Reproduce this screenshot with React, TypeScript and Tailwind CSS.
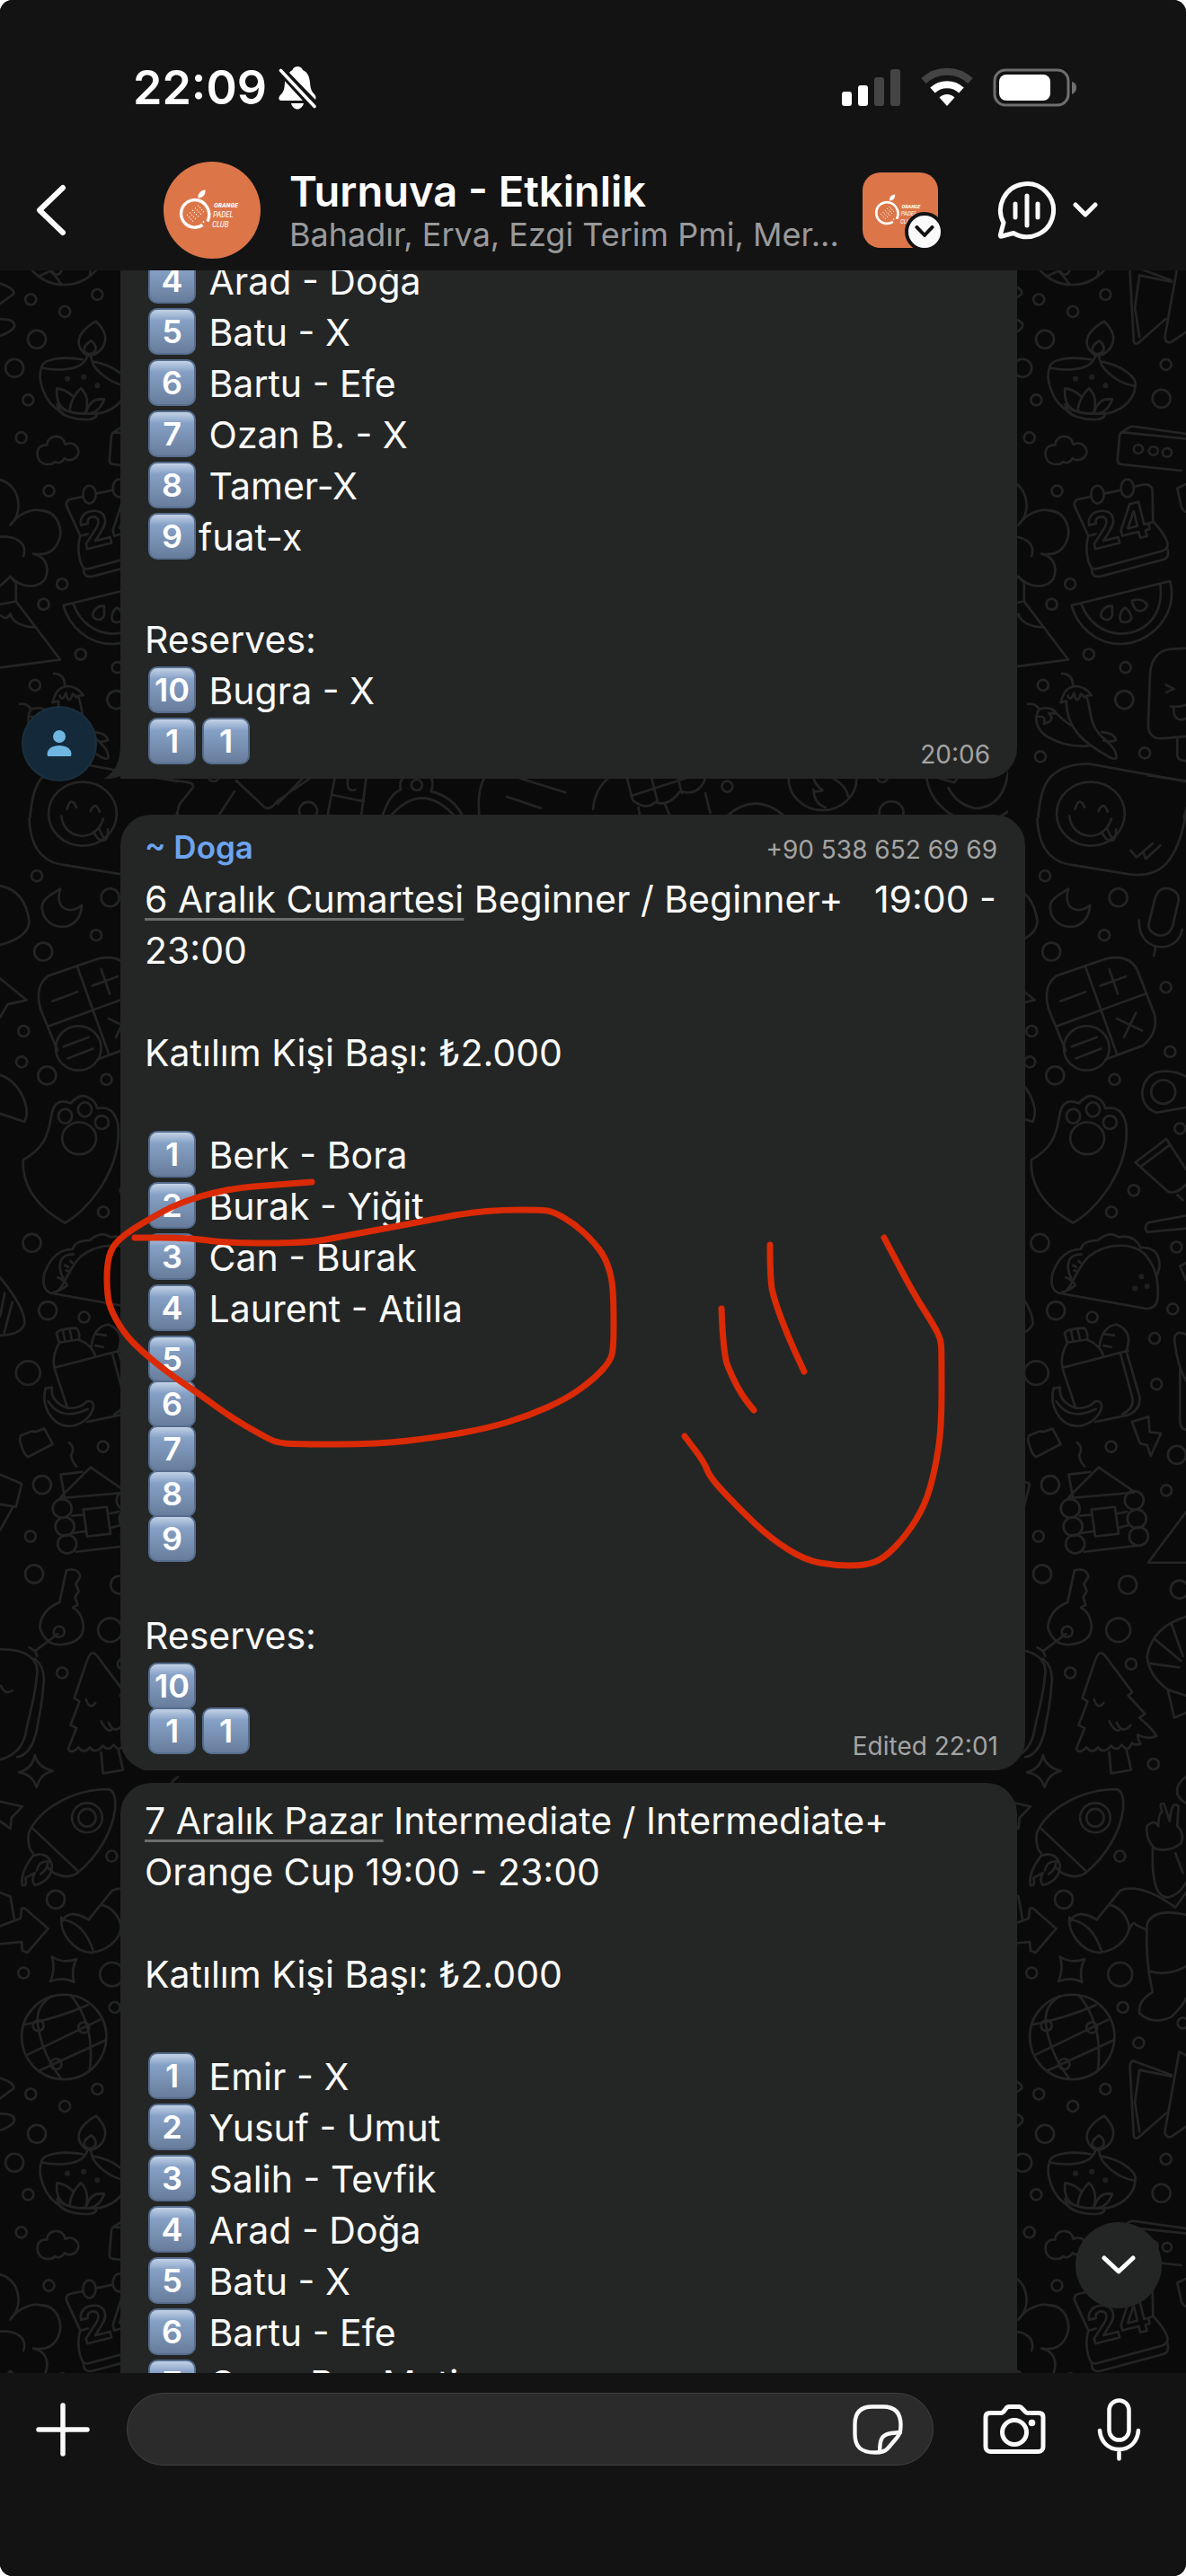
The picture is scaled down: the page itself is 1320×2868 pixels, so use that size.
import type { ReactNode } from "react";
import clsx from "clsx";

type Point = [number, number];

interface Row {
  keys?: string[];
  text?: string;
  link?: string;
}

const FIRST_ROWS: Row[] = [
  { keys: ["4"], text: " Arad - Doğa" },
  { keys: ["5"], text: " Batu - X" },
  { keys: ["6"], text: " Bartu - Efe" },
  { keys: ["7"], text: " Ozan B. - X" },
  { keys: ["8"], text: " Tamer-X" },
  { keys: ["9"], text: "fuat-x" },
  {},
  { text: "Reserves:" },
  { keys: ["10"], text: " Bugra - X" },
  { keys: ["1", "1"] },
];

const SATURDAY_ROWS: Row[] = [
  { link: "6 Aralık Cumartesi", text: " Beginner / Beginner+   19:00 -" },
  { text: "23:00" },
  {},
  { text: "Katılım Kişi Başı: ₺2.000" },
  {},
  { keys: ["1"], text: " Berk - Bora" },
  { keys: ["2"], text: " Burak - Yiğit" },
  { keys: ["3"], text: " Can - Burak" },
  { keys: ["4"], text: " Laurent - Atilla" },
  { keys: ["5"] },
  { keys: ["6"] },
  { keys: ["7"] },
  { keys: ["8"] },
  { keys: ["9"] },
  {},
  { text: "Reserves:" },
  { keys: ["10"] },
  { keys: ["1", "1"] },
];

const SUNDAY_ROWS: Row[] = [
  { link: "7 Aralık Pazar", text: " Intermediate / Intermediate+" },
  { text: "Orange Cup 19:00 - 23:00" },
  {},
  { text: "Katılım Kişi Başı: ₺2.000" },
  {},
  { keys: ["1"], text: " Emir - X" },
  { keys: ["2"], text: " Yusuf - Umut" },
  { keys: ["3"], text: " Salih - Tevfik" },
  { keys: ["4"], text: " Arad - Doğa" },
  { keys: ["5"], text: " Batu - X" },
  { keys: ["6"], text: " Bartu - Efe" },
  { keys: ["7"], text: " Ozan B. - Metin" },
];

const INK: Point[][] = [
  [
    [347, 1316], [309, 1319], [269, 1322], [236, 1328], [198, 1340], [168, 1356], [139, 1374], [124, 1389],
    [119, 1409], [119, 1436], [122, 1456], [137, 1483], [156, 1503], [189, 1530], [219, 1550], [257, 1578],
    [290, 1597], [307, 1606], [328, 1608], [421, 1608], [488, 1600], [543, 1590], [589, 1576], [631, 1557],
    [660, 1536], [679, 1516], [683, 1500], [683, 1451], [681, 1422], [673, 1399], [660, 1382], [640, 1363],
    [616, 1349], [602, 1347], [560, 1347], [522, 1350], [480, 1358], [379, 1377], [341, 1384], [253, 1384],
    [210, 1378], [150, 1378],
  ],
  [
    [984, 1378], [995, 1399], [1018, 1442], [1039, 1475], [1047, 1491], [1048, 1505], [1048, 1589], [1041, 1635],
    [1030, 1675], [1009, 1709], [984, 1735], [963, 1743], [929, 1743], [896, 1737], [858, 1713], [825, 1682],
    [790, 1645], [784, 1628], [762, 1599],
  ],
  [[857, 1386], [857, 1425], [862, 1448], [877, 1488], [895, 1527]],
  [[803, 1457], [805, 1508], [814, 1531], [826, 1554], [839, 1570]],
];

// quadratic curve through the midpoints, so the ink has no corners
function inkPath(points: Point[]): string {
  let d = `M${points[0][0]} ${points[0][1]}`;
  for (let i = 1; i < points.length - 1; i++) {
    const [x, y] = points[i];
    const [nx, ny] = points[i + 1];
    d += ` Q${x} ${y} ${(x + nx) / 2} ${(y + ny) / 2}`;
  }
  const last = points[points.length - 1];
  return `${d} L${last[0]} ${last[1]}`;
}

interface BandProps {
  x: number;
  y: number;
  sy: number;
  small?: Point[];
  big?: Point[];
  dots?: Point[];
  ellipses?: [number, number, number, number][];
  paths: string[];
}

const SX = 0.4209;

function Band({ x, y, sy, small = [], big = [], dots = [], ellipses = [], paths }: BandProps) {
  return (
    <g transform={`translate(${x} ${y}) scale(${SX} ${sy})`}>
      {small.map(([cx, cy], i) => (
        <ellipse key={i} cx={cx} cy={cy} rx={6 / SX} ry={6 / sy} vectorEffect="non-scaling-stroke" />
      ))}
      {big.map(([cx, cy], i) => (
        <ellipse key={i} cx={cx} cy={cy} rx={10 / SX} ry={10 / sy} vectorEffect="non-scaling-stroke" />
      ))}
      {dots.map(([cx, cy], i) => (
        <ellipse key={i} cx={cx} cy={cy} rx={3 / SX} ry={3 / sy} fill="#1f1f1f" stroke="none" />
      ))}
      {ellipses.map(([cx, cy, rx, ry], i) => (
        <ellipse key={i} cx={cx} cy={cy} rx={rx} ry={ry} vectorEffect="non-scaling-stroke" />
      ))}
      {paths.map((d) => (
        <path key={d} d={d} vectorEffect="non-scaling-stroke" />
      ))}
    </g>
  );
}

function Doodles() {
  return (
    <>
      <Band
        x={-462}
        y={290}
        sy={0.3954}
        small={[
          [1179, 110], [1355, 96], [1269, 144], [1515, 293], [1172, 393], [1154, 499], [1227, 649], [1262, 911],
          [1213, 968], [1311, 1109], [1408, 1146], [1190, 1196], [1183, 1397], [1459, 1387],
        ]}
        big={[[1195, 222], [1136, 303], [1503, 389], [1405, 1237]]}
        dots={[[1276, 333], [1319, 328], [1355, 352]]}
        ellipses={[
          [1334, 659, 17, 25], [1413, 641, 17, 25], [1316, 1558, 90, 90],
          [1442, 531, 12, 12], [1482, 536, 12, 12], [1518, 541, 12, 12],
        ]}
        paths={[
          "M1352 171C1320 190 1300 215 1307 240C1315 262 1330 268 1335 268C1355 265 1378 245 1376 215C1374 195 1360 180 1352 171Z",
          "M1338 226C1325 235 1317 247 1322 257C1330 268 1348 262 1351 250C1352 240 1345 230 1338 226Z",
          "M1207 302C1240 310 1300 312 1320 285Q1328 275 1328 268M1207 302C1210 275 1270 270 1316 279M1207 302C1197 330 1210 400 1262 428M1338 268C1338 300 1380 345 1434 354C1440 330 1400 295 1341 284M1434 354C1430 400 1390 428 1348 432M1249 405C1250 440 1300 450 1335 447C1352 445 1355 435 1352 430M1255 413C1280 432 1320 434 1360 430",
          "M1248 360C1245 400 1260 420 1283 426C1280 400 1300 370 1312 360C1330 380 1330 400 1325 428C1335 395 1350 388 1373 391C1365 415 1350 430 1330 431M1248 360C1265 362 1280 372 1290 382M1283 426C1300 432 1315 431 1325 428",
          "M1222 520C1222 490 1265 485 1270 518C1295 505 1315 535 1300 553C1290 565 1275 563 1268 557C1262 570 1250 572 1243 567C1232 578 1205 578 1198 555C1192 530 1205 518 1222 520Z",
          "M1568 502L1402 484C1394 484 1392 490 1392 498L1387 562C1387 570 1390 573 1398 574L1555 592M1395 486L1418 470Q1424 466 1434 468L1568 488M1568 630L1545 641L1555 690Q1558 705 1568 708",
          "M1316 665L1284 672Q1270 676 1274 692L1310 776C1302 800 1304 845 1318 865Q1322 870 1332 868L1505 818Q1522 812 1519 795Q1512 770 1481 735L1479 645Q1475 628 1455 631L1434 636M1354 656L1395 647M1310 776L1330 770M1481 735L1470 740M1318 867L1320 880Q1325 892 1340 890L1508 842Q1524 838 1520 814",
          "M1265 971L1526 903C1550 1000 1470 1080 1395 1080C1330 1080 1280 1030 1265 971ZM1291 966C1310 1020 1350 1050 1395 1051C1460 1050 1510 1000 1500 910",
          "M1373 973C1355 970 1340 990 1344 1003C1350 1012 1365 1018 1373 1000ZM1407 978C1395 985 1390 1005 1396 1016C1405 1022 1420 1018 1424 1008C1422 990 1412 980 1407 978ZM1426 957C1445 950 1465 960 1465 973C1460 988 1440 990 1435 982C1430 975 1425 965 1426 957Z",
          "M1098 618C1145 630 1165 700 1125 745C1150 705 1190 700 1205 704C1250 705 1270 760 1248 800C1235 825 1210 830 1186 826C1215 832 1230 860 1218 895C1200 925 1155 925 1125 890M1098 778C1140 775 1170 795 1160 832",
          "M1100 915L1125 890L1140 908L1140 960L1257 1124L1100 1146M1100 968L1140 960M1100 1000Q1115 1015 1125 995C1130 1020 1165 1035 1192 1032",
          "M1568 1092L1530 1094C1490 1097 1475 1130 1473 1165L1468 1310Q1470 1345 1500 1346L1568 1340M1545 1346L1545 1395Q1548 1408 1568 1409M1515 1195L1536 1206L1516 1216M1528 1256Q1550 1258 1568 1252M1536 1260C1533 1290 1550 1298 1568 1290",
          "M1240 1163Q1270 1165 1269 1200C1285 1195 1305 1205 1318 1224L1304 1226C1318 1260 1310 1300 1340 1335C1365 1360 1385 1375 1384 1400Q1380 1408 1360 1395C1320 1370 1250 1330 1252 1240L1237 1245Q1245 1205 1269 1200M1256 1225Q1262 1245 1272 1218Q1280 1255 1290 1220L1300 1230",
          "M1150 1249Q1168 1246 1180 1263C1205 1255 1220 1265 1225 1275M1180 1263C1165 1290 1172 1320 1200 1340Q1250 1372 1310 1367M1225 1275Q1250 1300 1262 1308M1225 1275L1205 1275Q1225 1295 1192 1305Q1200 1280 1175 1285M1345 1328Q1378 1330 1383 1350Q1375 1358 1350 1352",
          "M1177 1568C1185 1480 1200 1420 1310 1417L1568 1467M1275 1545Q1285 1505 1300 1540M1337 1550Q1350 1520 1361 1552",
          "M1098 65Q1140 80 1133 95L1098 122M1098 165Q1138 165 1136 185Q1130 200 1098 212",
        ]}
      />
      <text
        x={94}
        y={612}
        transform="rotate(-14 94 612)"
        fontSize={54}
        fontWeight={700}
        fontFamily="Inter, sans-serif"
      >
        24
      </text>
      {/* the strips that show between two bubbles */}
      <Band
        x={0}
        y={290}
        sy={0.3954}
        small={[[565, 1452], [1102, 1477]]}
        big={[[815, 1550]]}
        paths={[
          "M370 1450L500 1470Q515 1475 510 1485L475 1530L465 1568M625 1465L700 1540Q715 1550 735 1520L820 1458M575 1568L620 1495M735 1530Q780 1480 800 1458",
          "M885 1458L865 1568M968 1458L955 1568M878 1505L962 1523M920 1458Q915 1500 940 1490",
          "M1010 1568Q1030 1500 1060 1490Q1055 1470 1065 1458M1225 1568Q1200 1510 1140 1495Q1148 1470 1140 1458M1030 1568Q1115 1460 1205 1568M1268 1568Q1260 1500 1280 1458M1340 1510L1430 1542M1375 1458L1495 1498",
        ]}
      />
      <Band
        x={660}
        y={290}
        sy={0.3954}
        small={[[355, 1481], [765, 1454]]}
        ellipses={[[789, 1555, 32, 32], [607, 1458, 90, 90], [1017, 1435, 136, 145]]}
        paths={[
          "M90 1458L105 1520Q140 1550 165 1525Q200 1540 230 1495Q280 1510 297 1458M100 1508L297 1440M155 1458L170 1520M225 1458L235 1500M120 1540L125 1568M190 1530L205 1568M297 1500L310 1555",
          "M350 1568Q430 1490 510 1568M0 1545Q5 1490 40 1458M583 1458Q590 1480 607 1492Q580 1500 583 1490Q585 1530 615 1540M635 1458Q670 1480 675 1510",
          "M940 1485Q960 1530 1010 1543Q1085 1540 1098 1440M905 1455L955 1470L970 1450",
        ]}
      />
      <Band
        x={-462}
        y={900}
        sy={0.574}
        small={[
          [1195, 131], [1352, 246], [1515, 347], [1160, 432], [1155, 492], [1526, 472], [1379, 526], [1552, 621],
          [1430, 741], [1371, 783], [1543, 851], [1320, 987], [1533, 971], [1485, 1028], [1490, 1117], [1370, 1238],
          [1516, 1323], [1178, 1412], [1254, 1597],
        ]}
        big={[
          [1389, 173], [1212, 278], [1222, 518], [1182, 843], [1224, 974], [1544, 1254], [1209, 1312], [1188, 1485],
          [1414, 1506], [1551, 1515],
        ]}
        dots={[[1450, 908], [1433, 931], [1465, 927]]}
        ellipses={[
          [1172, 1095, 32, 23], [1305, 465, 60, 43], [1508, 550, 32, 23], [1270, 597, 18, 14], [1322, 584, 18, 14],
          [1367, 609, 18, 13], [1307, 640, 45, 31], [1262, 1358, 25, 18], [1431, 1342, 25, 18], [1269, 1393, 25, 18],
          [1438, 1378, 25, 18], [1275, 1427, 25, 18], [1443, 1412, 25, 18],
        ]}
        paths={[
          "M1175 20C1178 90 1230 108 1270 110L1420 128C1500 135 1545 105 1568 10M1260 15C1265 60 1350 70 1371 20M1345 45C1360 70 1385 68 1383 40M1360 40L1372 58M1422 82L1438 95L1480 68M1455 85L1462 98L1500 72",
          "M1257 156C1240 165 1205 175 1209 195C1215 240 1310 245 1314 188C1290 205 1240 200 1257 156",
          "M1485 178Q1495 150 1525 156Q1552 163 1548 180L1533 228Q1522 250 1493 246Q1465 238 1470 222ZM1444 217C1440 280 1545 285 1558 235M1488 268L1483 286",
          "M1098 150Q1165 160 1175 220Q1172 250 1098 265M1098 330L1168 372L1118 380L1098 405M1098 517C1150 530 1180 580 1163 608L1098 592",
          "M1225 325L1360 291Q1420 283 1440 315L1485 400Q1495 435 1455 460L1355 487M1250 470L1205 390Q1188 345 1225 325M1302 307L1386 478M1228 422L1460 360M1236 374L1302 356M1342 344L1409 326M1365 312L1388 360M1385 408L1452 431M1436 396L1404 444M1266 462L1332 444M1277 485L1344 466",
          "M1568 520Q1530 505 1490 512C1440 525 1440 580 1490 590L1568 580",
          "M1159 682C1210 660 1225 640 1235 590Q1245 560 1285 572Q1310 550 1335 562Q1350 568 1355 582Q1400 575 1410 615C1420 700 1330 780 1269 804C1210 780 1155 740 1159 682Z",
          "M1568 700L1516 641L1434 687L1520 743Q1540 750 1568 730M1448 695L1525 653M1545 750L1560 760M1568 790L1470 803Q1455 810 1465 822L1568 815M1568 882L1552 888L1568 915",
          "M1236 940C1265 940 1270 900 1310 870C1360 840 1440 840 1470 875C1500 905 1495 950 1490 960Q1480 972 1460 970L1230 940Q1205 930 1216 900Q1240 855 1290 855Q1295 838 1335 838Q1365 818 1390 832Q1430 825 1448 852Q1500 850 1498 890L1492 905M1292 865Q1255 865 1256 890Q1258 905 1265 910M1250 910Q1270 915 1275 925Q1260 935 1240 938M1270 886L1278 890M1272 896L1280 898M1284 878L1290 882",
          "M1254 1036L1247 1018Q1250 1010 1298 1008Q1310 1015 1307 1030ZM1264 1013L1270 1034M1282 1011L1288 1032M1255 1036Q1235 1060 1241 1085L1275 1160M1305 1030Q1340 1040 1350 1062M1241 1085L1415 1052M1339 1045Q1345 1005 1385 1001Q1430 1015 1410 1052L1445 1140Q1450 1165 1415 1177L1328 1190M1394 1056L1427 1145Q1430 1165 1400 1175M1354 1020L1378 1022M1350 1042L1370 1045",
          "M1218 1125L1235 1123Q1230 1150 1275 1163Q1310 1165 1328 1150Q1345 1148 1345 1160C1340 1185 1300 1200 1275 1198C1235 1195 1205 1160 1218 1125ZM1225 1150Q1260 1190 1330 1165",
          "M1098 910Q1165 970 1163 1000Q1150 1022 1098 1022M1110 940L1098 985M1130 958L1108 1020",
          "M1152 1217L1182 1208L1192 1209L1215 1203L1237 1233L1172 1258Q1160 1255 1150 1225ZM1425 1190L1469 1180L1472 1210L1502 1212L1475 1256L1465 1235L1447 1232ZM1280 1230Q1298 1240 1285 1255Q1290 1270 1300 1276",
          "M1258 1336L1337 1278L1430 1325M1268 1334L1258 1292L1315 1287M1258 1338L1430 1327M1288 1372L1320 1370M1385 1368L1412 1364M1290 1406L1325 1402M1388 1396L1418 1390M1298 1442L1440 1430M1318 1360L1380 1355L1390 1407L1328 1412Z",
          "M1568 1365L1468 1463L1568 1463M1098 1292L1155 1310L1140 1355L1098 1350M1132 1355L1098 1400M1568 1020Q1535 1010 1538 1035Q1545 1080 1568 1110M1552 1085L1552 1190Q1555 1205 1568 1205",
          "M1273 1478L1255 1540Q1205 1555 1203 1590Q1220 1625 1260 1622Q1320 1618 1318 1585Q1315 1560 1290 1550L1303 1545L1296 1530L1306 1518L1298 1505L1310 1490Q1305 1472 1273 1478Z",
        ]}
      />
      <Band
        x={-462}
        y={1800}
        sy={0.5485}
        small={[
          [1262, 114], [1423, 96], [1482, 299], [1393, 486], [1160, 723], [1401, 793], [1443, 865], [1560, 825],
          [1199, 830], [1319, 834], [1246, 908],
        ]}
        big={[[1245, 574]]}
        ellipses={[
          [1389, 27, 32, 24], [1394, 726, 32, 24], [1328, 408, 40, 30], [1328, 408, 23, 18], [1267, 853, 112, 86],
        ]}
        paths={[
          "M1250 35L1190 70L1175 62M1190 70L1196 80M1098 66C1190 65 1200 100 1195 120C1190 170 1170 210 1165 240Q1150 280 1098 290M1190 85Q1220 105 1212 140C1210 180 1200 200 1195 230Q1180 280 1143 285M1100 140Q1110 160 1130 150",
          "M1343 74Q1335 72 1325 95L1294 165L1308 172L1284 220L1300 226L1278 268Q1285 280 1305 265Q1320 280 1335 265Q1350 280 1370 262Q1385 275 1398 260Q1415 278 1425 256Q1435 262 1448 258Q1440 248 1440 240Q1470 250 1490 242Q1480 228 1445 205L1460 197L1415 160L1426 153L1355 80Q1348 73 1343 74ZM1365 275L1370 318L1423 311L1410 268M1325 168Q1335 190 1350 175M1365 212Q1380 235 1392 230M1385 215Q1400 240 1422 220",
          "M1568 0Q1480 20 1465 80Q1470 120 1520 148L1568 160M1520 148L1537 205L1568 195M1475 95L1550 103M1485 45L1555 90M1530 15L1560 80",
          "M1190 281Q1197 305 1237 313Q1205 318 1194 346Q1183 320 1148 316Q1183 308 1190 281ZM1235 690Q1265 705 1300 695Q1285 715 1293 742Q1265 730 1231 740Q1245 715 1235 690Z",
          "M1173 440C1200 390 1290 350 1385 350Q1405 355 1402 390C1395 440 1350 490 1306 518Q1280 535 1240 520L1225 510M1185 430L1306 518M1173 440Q1170 470 1185 480M1185 485Q1150 520 1157 545Q1170 548 1165 530L1190 520Q1178 535 1190 545Q1235 535 1235 505Q1225 475 1185 485M1195 515Q1200 495 1225 497Q1222 515 1205 522",
          "M1098 375L1157 385L1128 408L1125 430L1098 415M1480 470Q1475 570 1520 570Q1550 565 1568 540M1485 470Q1460 450 1465 425Q1485 410 1495 425Q1495 400 1505 395Q1495 375 1510 380L1525 415Q1530 370 1548 385L1545 425Q1565 440 1555 460Q1520 480 1485 470M1540 480L1560 520M1568 325Q1540 340 1545 360Q1555 375 1568 378",
          "M1260 620Q1280 590 1332 615L1395 555Q1450 540 1540 590L1568 560M1260 610C1255 640 1290 680 1340 682C1400 675 1425 640 1415 620Q1400 590 1365 585M1262 615Q1320 620 1345 680M1418 635Q1430 615 1435 625L1462 635M1568 605Q1480 590 1465 625Q1460 700 1480 762Q1440 780 1445 805Q1480 830 1530 812Q1560 790 1568 775M1475 720Q1520 730 1568 710",
          "M1098 628L1152 612L1155 592Q1165 590 1175 600L1225 633L1170 682L1157 678L1155 660L1098 664M1098 560L1125 568L1135 612",
          "M1162 828Q1250 815 1330 788M1168 890L1362 818M1200 922L1375 860M1235 770Q1190 790 1198 830Q1210 890 1260 938M1285 768Q1350 830 1335 920",
          "M1530 930L1430 902Q1420 900 1420 915L1430 1055Q1435 1062 1445 1055L1515 1008M1445 920L1433 985L1445 1045M1445 920L1530 933M1568 890L1550 883L1512 1045Q1515 1060 1530 1055L1568 1035",
        ]}
      />
    </>
  );
}

function Wallpaper() {
  return (
    <svg className="absolute inset-0 h-full w-full" aria-hidden="true">
      <defs>
        <pattern id="doodles" width={1122} height={1998} patternUnits="userSpaceOnUse">
          <g fill="none" stroke="#242424" strokeWidth={2.6} strokeLinecap="round" strokeLinejoin="round">
            <g transform="translate(0 -301)">
              <Doodles />
            </g>
            <g transform="translate(0 -2299)">
              <Doodles />
            </g>
          </g>
        </pattern>
      </defs>
      <rect width="100%" height="100%" fill="url(#doodles)" />
    </svg>
  );
}

function ClubLogo({ className }: { className?: string }) {
  return (
    <svg viewBox="0 0 108 108" className={className} role="img" aria-label="Orange Padel Club">
      <rect width="108" height="108" fill="#dc7649" />
      <path d="M49 66.500 C51.500 61 51.500 55 48 50 A15.300 15.300 0 1 0 43.500 70.500" fill="none" stroke="#fff" strokeWidth="3.400" />
      <path d="M38.500 40.500 C38 35 41.500 32 46.500 31.500 C47 37 43.500 40.500 38.500 40.500Z" fill="#fff" />
      <g fill="#fff">
        {[0, 1, 2, 3].map((r) =>
          [0, 1, 2, 3, 4].map((c) => (
            <circle key={`${r}-${c}`} cx={26.5 + c * 3 + r * 2} cy={59.5 - c * 2.6 + r * 2.2} r={0.7} />
          ))
        )}
        <circle cx="44.5" cy="67" r="1" />
        <g fontFamily="'Liberation Sans Narrow', 'Roboto Condensed', 'Liberation Sans', sans-serif" fontStyle="italic" fontSize="9">
          <text x="56" y="51" fontWeight="700" fontSize="8">ORANGE</text>
          <text x="55" y="62">PADEL</text>
          <text x="54" y="73">CLUB</text>
        </g>
      </g>
    </svg>
  );
}

function Keycap({ label }: { label: string }) {
  return (
    <span className="mt-[2px] mr-[3px] ml-[4px] h-[52px] w-[53px] shrink-0 rounded-[10px] border-2 border-[#566d8e] bg-linear-to-b from-[#c3d2e6] via-[#86a1c6] via-25% to-[#687d9c] text-center text-[36px] leading-[48px] font-semibold text-white">
      {label}
    </span>
  );
}

function MessageRow({ row }: { row: Row }) {
  const keysOnly = row.keys && !row.text;
  return (
    <p className={clsx("flex whitespace-pre", keysOnly ? "h-[50px]" : "h-[57px]")}>
      {row.keys?.map((k, i) => <Keycap key={i} label={k} />)}
      {row.link && (
        <a
          href="#"
          className="underline decoration-[#6c6d6d] decoration-[3px] underline-offset-[6px] [text-decoration-skip-ink:none]"
        >
          {row.link}
        </a>
      )}
      {row.text && <span>{row.text}</span>}
    </p>
  );
}

interface BubbleProps {
  rows: Row[];
  className?: string;
  header?: ReactNode;
  stamp?: string;
  children?: ReactNode;
}

function Bubble({ rows, className, header, stamp, children }: BubbleProps) {
  return (
    <article className={clsx("relative ml-[134px] bg-[#242625] pr-[31px] pl-[27px]", className)}>
      {header}
      <div className="text-[41px] leading-[59px] text-[#fafafa]">
        {rows.map((row, i) => (
          <MessageRow key={i} row={row} />
        ))}
      </div>
      {stamp && (
        <time className="absolute right-[30px] bottom-[10px] text-[28px] leading-[34px] text-[#a3a4a4]">
          {stamp}
        </time>
      )}
      {children}
    </article>
  );
}

function StatusBar() {
  return (
    <div className="flex h-[64px] items-center justify-between pr-[122px] pl-[148px]">
      <div className="flex items-center gap-[13px]">
        <time className="text-[52px] leading-[64px] font-semibold">22:09</time>
        <svg width="42" height="48" viewBox="0 0 42 48" fill="#fff" role="img" aria-label="Silent">
          <path d="M12 7 C13.500 5 14.500 4.500 15.500 4 C16.500 1 19 0 21 0 C23.500 0 26 1 27 4 C32 6 34.500 11 35 18 C35.500 25 37 28 40 31 C41.500 33 42 35 41 37Z" />
          <path d="M7 16 L27 38 L3 38 C0 38 -0.500 34.500 2 32 C5 29 7 26 7 16Z" />
          <path d="M14 41 H28 C27 45 24 47.500 21 47.500 C18 47.500 15 45 14 41Z" />
          <path d="M2 4 L40 45" stroke="#131314" strokeWidth="9" />
          <path d="M2.500 4.500 L40 44.500" stroke="#fff" strokeWidth="3.600" strokeLinecap="round" />
        </svg>
      </div>
      <svg width="262" height="46" viewBox="0 0 262 46" role="img" aria-label="Signal, Wi-Fi and battery">
        <rect x="1" y="27" width="11" height="16" rx="3" fill="#fff" />
        <rect x="19" y="20" width="11" height="23" rx="3" fill="#fff" />
        <rect x="37" y="11" width="11" height="32" rx="3" fill="#444" />
        <rect x="55" y="2" width="11" height="41" rx="3" fill="#444" />
        <g fill="none">
          <path d="M92 15 A38 38 0 0 1 144 15" stroke="#444" strokeWidth="8" />
          <path d="M102 25.500 A23.500 23.500 0 0 1 134 25.500" stroke="#fff" strokeWidth="8" />
        </g>
        <path d="M118 43 L109.500 33.500 A12 12 0 0 1 126.500 33.500Z" fill="#fff" />
        <rect x="171" y="3" width="82" height="39" rx="12" fill="none" stroke="#6f6f6f" strokeWidth="3" />
        <rect x="176" y="8" width="57" height="29" rx="8" fill="#fff" />
        <path d="M257 16 C261 17 262 20 262 22.500 C262 25 261 28 257 30Z" fill="#6f6f6f" />
      </svg>
    </div>
  );
}

function ChatHeader() {
  return (
    <header className="shrink-0 bg-[#131314] pt-[66px] pb-[13px] text-white">
      <StatusBar />
      <div className="mt-[50px] flex h-[108px] items-center pr-[98px] pl-[40px]">
        <button aria-label="Back">
          <svg width="34" height="58" viewBox="0 0 34 58" fill="none" stroke="#fff" strokeWidth="6" strokeLinecap="round" strokeLinejoin="round">
            <path d="M30 4 L4 29 L30 54" />
          </svg>
        </button>
        <ClubLogo className="ml-[108px] h-[108px] w-[108px] shrink-0 rounded-full" />
        <div className="ml-[32px] min-w-0 flex-1">
          <h1 className="truncate text-[47px] leading-[54px] font-semibold">Turnuva - Etkinlik</h1>
          <p className="truncate text-[36px] leading-[42px] text-[#9a9a9b]">Bahadır, Erva, Ezgi Terim Pmi, Mer...</p>
        </div>
        <button className="relative h-[84px] w-[84px] shrink-0" aria-label="Open club menu">
          <ClubLogo className="h-[84px] w-[84px] rounded-[20px]" />
          <span className="absolute -right-[7px] -bottom-[4px] flex h-[44px] w-[44px] items-center justify-center rounded-full border-4 border-[#131314] bg-[#fafafa]">
            <svg width="22" height="14" viewBox="0 0 22 14" fill="none" stroke="#111" strokeWidth="4" strokeLinecap="round" strokeLinejoin="round">
              <path d="M2.500 2 L11 11 L19.500 2" />
            </svg>
          </span>
        </button>
        <button className="ml-[66px] flex shrink-0 items-center gap-[18px]" aria-label="Voice chat">
          <svg width="66" height="66" viewBox="0 0 66 66" fill="none" stroke="#fafafa" strokeWidth="5" strokeLinecap="round" strokeLinejoin="round">
            <path d="M7 47 A29.500 29.500 0 1 1 18 58.500 L5 62 C3.500 62.500 3 61.500 3.500 60Z" />
            <path d="M20 26 V41 M33 17 V50 M45 26 V41" />
          </svg>
          <svg width="28" height="18" viewBox="0 0 28 18" fill="none" stroke="#fafafa" strokeWidth="5" strokeLinecap="round" strokeLinejoin="round">
            <path d="M3 3 L14 14 L25 3" />
          </svg>
        </button>
      </div>
    </header>
  );
}

function Composer() {
  return (
    <footer className="shrink-0 bg-[#131314] pt-[22px] pb-[123px]">
      <form className="flex h-[81px] items-center pr-[50px] pl-[39px]">
        <button type="button" aria-label="Attach">
          <svg width="62" height="62" viewBox="0 0 62 62" stroke="#fafafa" strokeWidth="5.500" strokeLinecap="round">
            <path d="M31 4 V58 M4 31 H58" />
          </svg>
        </button>
        <div className="ml-[40px] flex h-[81px] min-w-0 flex-1 items-center rounded-full border border-[#404041] bg-[#2b2b2c] pr-[33px] pl-[36px]">
          <input aria-label="Message" className="min-w-0 flex-1 bg-transparent text-[41px] text-white outline-none" />
          <button type="button" aria-label="Stickers">
            <svg width="56" height="56" viewBox="0 0 56 56" fill="none" stroke="#fafafa" strokeWidth="4.400" strokeLinecap="round" strokeLinejoin="round">
              <path d="M22 2.500 H34 C47 2.500 53.500 9 53.500 23 C53.500 31 52 34 48 38.500 L39 49 C35.500 53 31 53.500 25 53.500 C9 53.500 2.500 47 2.500 33 V22 C2.500 9 9 2.500 22 2.500Z" />
              <path d="M53 31 L43 32 C34 33.500 31.500 37 30.500 45 L30 53" />
            </svg>
          </button>
        </div>
        <button type="button" className="ml-[55px]" aria-label="Camera">
          <svg width="70" height="56" viewBox="0 0 70 56" fill="none" stroke="#fafafa" strokeWidth="5" strokeLinejoin="round">
            <path d="M3 14 C3 11 5 9.500 8 9.500 H20 C21.500 9.500 22 9 23 8 L26.500 3.500 C27.300 2.600 28 2.500 29 2.500 H40 C41 2.500 42 2.600 42.700 3.500 L47 8 C48 9 48.500 9.500 50 9.500 H62 C65 9.500 67 11 67 14 V47 C67 50 65 52.500 62 52.500 H8 C5 52.500 3 50 3 47Z" />
            <circle cx="35" cy="31" r="13.500" />
            <circle cx="54.500" cy="20.500" r="3.800" fill="#fafafa" stroke="none" />
          </svg>
        </button>
        <button type="button" className="ml-[57px]" aria-label="Record voice message">
          <svg width="49" height="70" viewBox="0 0 49 70" fill="none" stroke="#fafafa" strokeWidth="4.600" strokeLinecap="round">
            <rect x="13.500" y="2.500" width="22" height="44" rx="11" />
            <path d="M3 36 C4 48 12 57 24.500 57 C37 57 45 48 46 36 M24.500 57 V67.500" />
          </svg>
        </button>
      </form>
    </footer>
  );
}

export default function App() {
  return (
    <div className="h-screen bg-white font-[Inter,'Noto_Sans',sans-serif]">
      <div className="flex h-full flex-col overflow-hidden rounded-[14px] bg-[#131314]">
        <ChatHeader />
        <main className="relative min-h-0 flex-1 overflow-hidden bg-[#0a0a0a]">
          <Wallpaper />
          <div className="relative -mt-[17px]">
            <Bubble rows={FIRST_ROWS} className="mr-[188px] rounded-br-[34px] pb-[20px]" stamp="20:06">
              <svg width="32" height="50" viewBox="0 0 32 50" fill="#242625" className="absolute bottom-0 -left-[18px]" aria-hidden="true">
                <path d="M18 0 V10 C18 32 12 42 0 50 C12 51 20 46 28 42 L32 50 V0Z" />
              </svg>
              <button
                className="absolute -bottom-[3px] -left-[110px] flex h-[84px] w-[84px] items-center justify-center rounded-full border-2 border-[#1b2f3d] bg-[#142a3a]"
                aria-label="Sender profile"
              >
                <svg width="28" height="30" viewBox="0 0 28 30" fill="#6fb6e3">
                  <circle cx="14" cy="7" r="7" />
                  <path d="M1 29 C-1 22 5 17 14 17 C23 17 29 22 27 29Z" />
                </svg>
              </button>
            </Bubble>

            <Bubble
              rows={SATURDAY_ROWS}
              className="mt-[40px] mr-[179px] rounded-[34px] pt-[12px] pb-[22px]"
              stamp="Edited 22:01"
              header={
                <div className="flex h-[53px] items-baseline justify-between leading-[48px]">
                  <span className="text-[35px] font-semibold text-[#6ca4f0]">~ Doga</span>
                  <span className="text-[28px] text-[#a3a4a4]">+90 538 652 69 69</span>
                </div>
              }
            >
              <svg
                viewBox="134 907 1007 1064"
                className="pointer-events-none absolute inset-0 z-10 h-full w-full overflow-visible"
                fill="none"
                stroke="#db2a06"
                strokeWidth={7}
                strokeLinecap="round"
                strokeLinejoin="round"
                aria-hidden="true"
              >
                {INK.map((points, i) => (
                  <path key={i} d={inkPath(points)} />
                ))}
              </svg>
            </Bubble>

            <Bubble rows={SUNDAY_ROWS} className="mt-[14px] mr-[188px] rounded-t-[34px] pt-[13px]" />
          </div>

          <button
            className="absolute right-[27px] bottom-[72px] flex h-[96px] w-[96px] items-center justify-center rounded-full bg-[#242625]"
            aria-label="Scroll to latest"
          >
            <svg width="38" height="22" viewBox="0 0 38 22" fill="none" stroke="#fff" strokeWidth="5" strokeLinecap="round" strokeLinejoin="round">
              <path d="M3 3 L19 18 L35 3" />
            </svg>
          </button>
        </main>
        <Composer />
      </div>
    </div>
  );
}
